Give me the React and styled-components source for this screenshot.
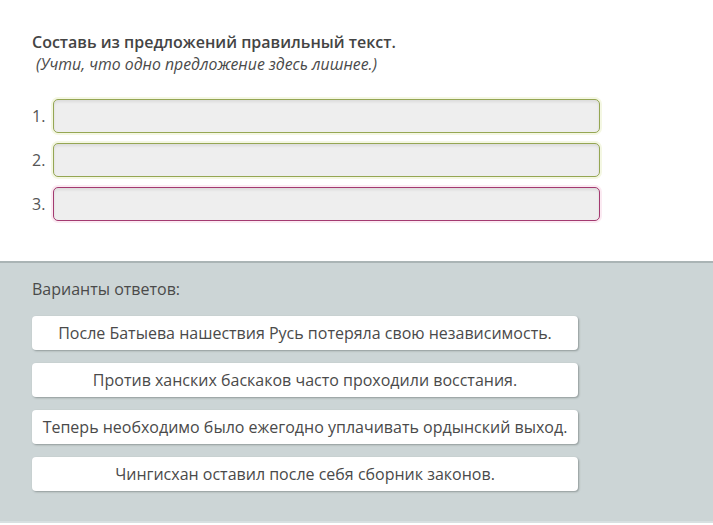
import React from "react";
import styled, { createGlobalStyle } from "styled-components";

const Global = createGlobalStyle`
  html, body { margin: 0; padding: 0; background: #ffffff; }
  body { font-family: "Open Sans", "Noto Sans", sans-serif; color: #4a4a4a; }
`;

const Page = styled.div`
  width: 713px;
  height: 525px;
  display: flex;
  flex-direction: column;
  background: #fff;
`;

const Top = styled.section`
  padding: 31px 32px 0 32px;
  height: 230px;
  box-sizing: border-box;
`;

const Title = styled.div`
  font-size: 16px;
  font-weight: 600;
  color: #444;
  line-height: 22px;
`;

const Hint = styled.div`
  font-size: 15.8px;
  font-style: italic;
  color: #4a4a4a;
  line-height: 22px;
  padding-left: 4px;
`;

const Slots = styled.div`
  margin-top: 24px;
  display: flex;
  flex-direction: column;
  gap: 10px;
`;

const SlotRow = styled.div`
  display: flex;
  align-items: center;
  gap: 6px;
`;

const Num = styled.span`
  width: 15px;
  font-size: 16px;
  color: #555;
`;

const Slot = styled.div`
  width: 545px;
  height: 32px;
  border: 1px solid ${(p) => p.$border};
  border-radius: 5px;
  background: #eeeeee;
  box-shadow: 0 0 0 2px ${(p) => p.$glow}, inset 0 2px 3px rgba(0, 0, 0, 0.08);
`;

const Bottom = styled.section`
  flex: 1;
  margin-top: 31px;
  background: #ccd5d6;
  border-top: 2px solid #aab4b5;
  border-bottom: 2px solid #d8e0e1;
  padding: 15px 32px 0 32px;
  margin-bottom: 2px;
`;

const Label = styled.div`
  font-size: 16px;
  color: #4a4a4a;
  line-height: 22px;
`;

const Options = styled.div`
  margin-top: 16px;
  display: flex;
  flex-direction: column;
  gap: 13px;
`;

const Option = styled.div`
  width: 546px;
  height: 34px;
  box-sizing: border-box;
  background: #ffffff;
  border-radius: 4px;
  box-shadow: 1px 1px 2px rgba(70, 80, 80, 0.45);
  display: flex;
  align-items: center;
  justify-content: center;
  font-size: 16px;
  color: #4a4a4a;
`;

const slots = [
  { n: "1.", border: "#95a653", glow: "#f4f7e3" },
  { n: "2.", border: "#95a653", glow: "#f4f7e3" },
  { n: "3.", border: "#a33a70", glow: "#fbeaf2" },
];

const options = [
  "После Батыева нашествия Русь потеряла свою независимость.",
  "Против ханских баскаков часто проходили восстания.",
  "Теперь необходимо было ежегодно уплачивать ордынский выход.",
  "Чингисхан оставил после себя сборник законов.",
];

export default function App() {
  return (
    <Page>
      <Global />
      <Top>
        <Title>Составь из предложений правильный текст.</Title>
        <Hint>(Учти, что одно предложение здесь лишнее.)</Hint>
        <Slots>
          {slots.map((s) => (
            <SlotRow key={s.n}>
              <Num>{s.n}</Num>
              <Slot $border={s.border} $glow={s.glow} />
            </SlotRow>
          ))}
        </Slots>
      </Top>
      <Bottom>
        <Label>Варианты ответов:</Label>
        <Options>
          {options.map((o) => (
            <Option key={o}>{o}</Option>
          ))}
        </Options>
      </Bottom>
    </Page>
  );
}
